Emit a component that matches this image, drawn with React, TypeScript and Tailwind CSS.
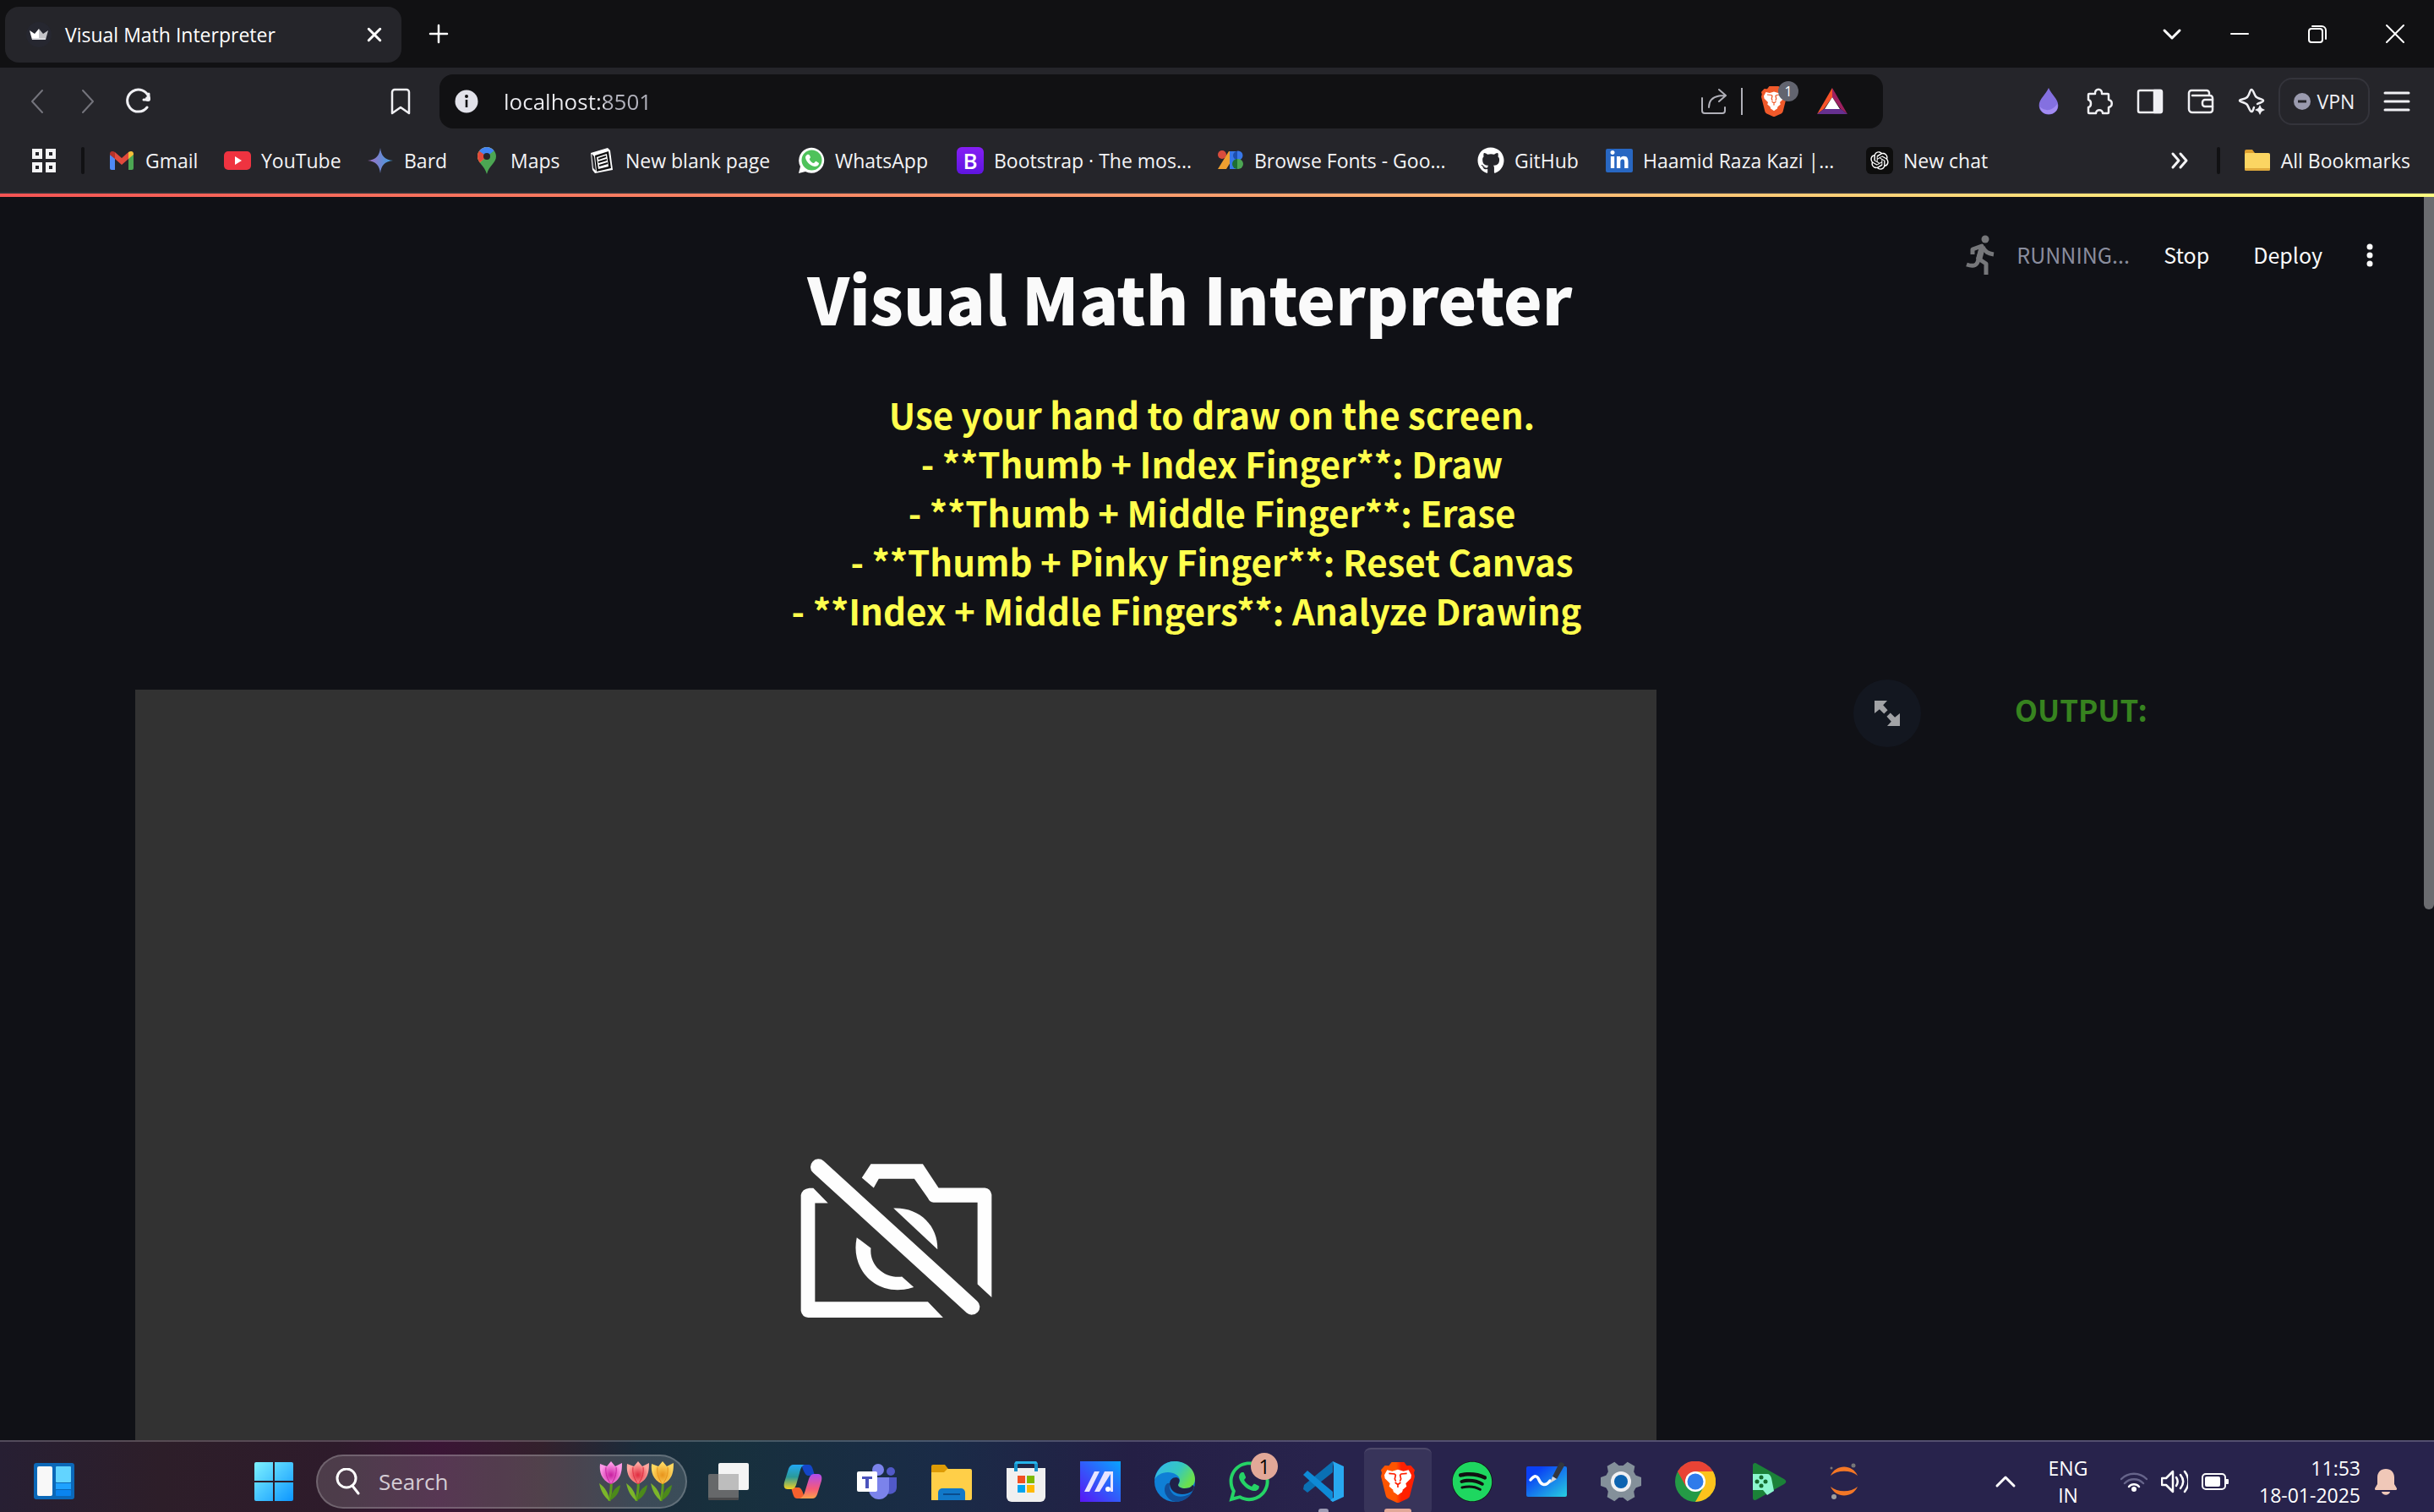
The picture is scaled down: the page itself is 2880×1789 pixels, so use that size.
import React from "react";
import { FaGithub, FaLinkedinIn, FaWhatsapp, FaSpotify } from "react-icons/fa";
import { RiOpenaiFill } from "react-icons/ri";

const uiFont = "font-['Open_Sans','Noto_Sans',sans-serif]";
const pageFont = "font-['Noto_Sans_CJK_SC','Noto_Sans',sans-serif]";

/* ---------- Shared glyphs ---------- */

function BraveMark({ className, id, from, to }: { className: string; id: string; from: string; to: string }) {
  return (
    <svg viewBox="0 0 120 144" className={className} aria-hidden="true">
      <defs>
        <linearGradient id={id} x1="0" x2="1">
          <stop offset="0.45" stopColor={from} />
          <stop offset="0.6" stopColor={to} />
        </linearGradient>
      </defs>
      <path
        d="M38 0h44l10 13 14-1 14 16-3 10 3 12-17 68c-1 6-5 9-9 12l-29 13q-5 2-10 0l-29-13c-4-3-8-6-9-12L0 50l3-12-3-10 14-16 14 1z"
        fill={`url(#${id})`}
      />
      <path
        d="M22 28l18 4 20-6 20 6 18-4 10 18-2 12-18 18 3 10-14 12-17-8-17 8-14-12 3-10-18-18-2-12z"
        fill="#fff"
      />
      <path d="M60 88l18 10-3 8-15 11-15-11-3-8z" fill="#fff" />
      <path
        d="M28 40l20 2 4 4-3 14 4 8M92 40l-20 2-4 4 3 14-4 8M50 72l10 8 10-8M60 80v10"
        fill="none"
        stroke={to}
        strokeWidth="5"
      />
    </svg>
  );
}

function Stroke({
  children,
  className = "h-8 w-8",
  width = 3,
}: {
  children: React.ReactNode;
  className?: string;
  width?: number;
}) {
  return (
    <svg
      viewBox="0 0 32 32"
      className={className}
      fill="none"
      stroke="currentColor"
      strokeWidth={width}
      strokeLinecap="round"
      strokeLinejoin="round"
      aria-hidden="true"
    >
      {children}
    </svg>
  );
}

/* ---------- Title bar ---------- */

function TitleBar() {
  return (
    <div className="flex h-20 items-center bg-[#111113] text-white">
      <div className="ml-1.5 mt-0.5 flex h-[66px] w-[469px] items-center rounded-2xl bg-[#25252a] pl-[25px] pr-4">
        <svg viewBox="0 0 30 30" className="h-[30px] w-[30px]" aria-hidden="true">
          <circle cx="15" cy="15" r="15" fill="#262730" />
          <path d="M4 10l6 4 5-6v13H7z" fill="#fff" />
          <path d="M15 8l5 6 6-4-3 11h-8z" fill="#c4c4c8" />
          <path d="M7 19h16v2H7z" fill="#dcdce0" />
        </svg>
        <span className="ml-4 flex-1 whitespace-nowrap text-[23px]">Visual Math Interpreter</span>
        <button type="button" aria-label="Close tab" className="flex h-8 w-8 items-center justify-center">
          <Stroke className="h-6 w-6" width={4}>
            <path d="M7 7l18 18M25 7L7 25" />
          </Stroke>
        </button>
      </div>
      <button type="button" aria-label="New tab" className="ml-6 flex h-10 w-10 items-center justify-center">
        <Stroke className="h-8 w-8" width={2.5}>
          <path d="M16 6v20M6 16h20" />
        </Stroke>
      </button>
      <div className="ml-auto flex h-full">
        <button type="button" aria-label="Search tabs" className="flex w-[68px] items-center justify-center">
          <Stroke width={3}>
            <path d="M7 12l9 9 9-9" />
          </Stroke>
        </button>
        <button type="button" aria-label="Minimize" className="flex w-[92px] items-center justify-center">
          <Stroke width={2}>
            <path d="M6 16h20" />
          </Stroke>
        </button>
        <button type="button" aria-label="Restore" className="flex w-[92px] items-center justify-center">
          <Stroke width={2}>
            <rect x="6" y="10" width="16" height="16" rx="3" />
            <path d="M10 7h11a5 5 0 0 1 5 5v10" />
          </Stroke>
        </button>
        <button type="button" aria-label="Close window" className="flex w-[92px] items-center justify-center">
          <Stroke width={2}>
            <path d="M6 6l20 20M26 6L6 26" />
          </Stroke>
        </button>
      </div>
    </div>
  );
}

/* ---------- Toolbar ---------- */

const toolButton = "flex h-15 w-15 items-center justify-center";

function Toolbar() {
  return (
    <div className="flex h-20 items-center bg-[#25252a] text-[#f0f0f4]">
      <div className="flex w-[520px] items-center pl-3.5 pr-4">
        <button type="button" aria-label="Back" className={`${toolButton} text-[#74747c]`}>
          <Stroke width={2}>
            <path d="M22 3L10 16l12 13" />
          </Stroke>
        </button>
        <button type="button" aria-label="Forward" className={`${toolButton} text-[#74747c]`}>
          <Stroke width={2}>
            <path d="M10 3l12 13-12 13" />
          </Stroke>
        </button>
        <button type="button" aria-label="Reload" className={toolButton}>
          <Stroke>
            <path d="M26 23A13 13 0 1 1 28 11" />
            <circle cx="27" cy="13" r="3" fill="currentColor" stroke="none" />
            <path d="M28 7v7h-6" />
          </Stroke>
        </button>
        <button type="button" aria-label="Bookmark this page" className={`${toolButton} ml-auto`}>
          <Stroke width={2.5}>
            <path d="M6 5a3 3 0 0 1 3-3h14a3 3 0 0 1 3 3v25l-10-7-10 7z" />
          </Stroke>
        </button>
      </div>

      <div className="flex h-16 flex-1 items-center rounded-2xl bg-[#111113] pl-[18px] pr-[42px]">
        <svg viewBox="0 0 28 28" className="h-7 w-7" aria-hidden="true">
          <circle cx="14" cy="14" r="13.5" fill="#e2e2ea" />
          <circle cx="14" cy="8" r="2" fill="#111113" />
          <path d="M12.7 12h2.6v9h-2.6z" fill="#111113" />
        </svg>
        <input
          aria-label="Address"
          defaultValue="localhost:8501"
          className="ml-[30px] min-w-0 flex-1 bg-[linear-gradient(90deg,#ececf0_119px,#b4b4be_119px)] bg-clip-text text-[26px] text-transparent outline-none"
        />
        <button type="button" aria-label="Share" className="text-[#b0b0b8]">
          <Stroke width={2}>
            <path d="M2 12v15a3 3 0 0 0 3 3h21a3 3 0 0 0 3-3v-4" />
            <path d="M10 23c0-9 6-14 18-14M22 2l8 7-8 7" />
          </Stroke>
        </button>
        <span className="ml-4 h-8 w-0.5 bg-[#b0b0b8]" />
        <button type="button" aria-label="Brave Shields, 1 blocked" className="relative ml-[19px]">
          <BraveMark id="shields" className="h-9 w-9" from="#f0592a" to="#f0592a" />
          <span className="absolute -top-1.5 left-[23px] flex h-6 w-6 items-center justify-center rounded-full bg-[#62646f] text-base text-white">
            1
          </span>
        </button>
        <button type="button" aria-label="Brave Rewards" className="ml-[33px]">
          <svg viewBox="0 0 36 32" className="h-8 w-9" aria-hidden="true">
            <path d="M18 0L0 31l8-6 10-14z" fill="#f8532a" />
            <path d="M18 0l18 31-8-6-10-14z" fill="#9e2060" />
            <path d="M0 31h36l-8-6H8z" fill="#66308f" />
            <path d="M18 11l9 14H9z" fill="#fff" />
          </svg>
        </button>
      </div>

      <div className="flex w-[652px] items-center justify-end pr-3.5">
        <button type="button" aria-label="Drop extension" className={toolButton}>
          <svg viewBox="0 0 26 34" className="h-8 w-[26px]" aria-hidden="true">
            <path d="M13 0c4 9 12 14 12 22a12 11.500 0 0 1-24 0C1 14 9 9 13 0z" fill="#8470e0" />
            <path d="M2 24c7 6 16 5 22-4 2 8-4 13-11 13S3 29 2 24z" fill="#a38cf2" />
          </svg>
        </button>
        <button type="button" aria-label="Extensions" className={toolButton}>
          <Stroke width={2.5}>
            <path d="M4 7h7c-1-7 9-7 8 0h7a1 1 0 0 1 1 1v6c5 1 5 8 0 9v6a1 1 0 0 1-1 1h-6c0-5-8-5-8 0H4a1 1 0 0 1-1-1v-6c4-1 4-8 0-9V8a1 1 0 0 1 1-1z" />
          </Stroke>
        </button>
        <button type="button" aria-label="Sidebar" className={toolButton}>
          <Stroke width={2.5}>
            <rect x="2" y="3" width="28" height="26" rx="2" />
            <path d="M21 3h8v26h-8z" fill="currentColor" />
          </Stroke>
        </button>
        <button type="button" aria-label="Wallet" className={toolButton}>
          <Stroke width={2.5}>
            <path d="M26 9V6a3 3 0 0 0-3-3H5a3 3 0 0 0-3 3v19a4 4 0 0 0 4 4h21a3 3 0 0 0 3-3V12a3 3 0 0 0-3-3H6" />
            <path d="M30 14h-9a3 3 0 0 0-3 3v2a3 3 0 0 0 3 3h9" />
          </Stroke>
        </button>
        <button type="button" aria-label="Leo AI" className={toolButton}>
          <Stroke width={2.5}>
            <path d="M23 19c4-2 7-2 7-4s-7-2-9-5-3-8-5-8-2 6-5 9-9 2-9 4 7 2 9 5 3 8 5 8 2-3 3-5" />
            <path d="M26 20l2 4 4 2-4 2-2 4-2-4-4-2 4-2z" fill="currentColor" stroke="none" />
          </Stroke>
        </button>
        <button
          type="button"
          className="mx-0.5 flex h-14 w-[108px] items-center justify-center gap-2 rounded-2xl border-2 border-[#34343b] text-[23px]"
        >
          <svg viewBox="0 0 20 20" className="h-5 w-5" aria-hidden="true">
            <circle cx="10" cy="10" r="10" fill="#9a9aae" />
            <path d="M5 8.500h10v3H5z" fill="#25252a" />
          </svg>
          VPN
        </button>
        <button type="button" aria-label="Menu" className={toolButton}>
          <Stroke>
            <path d="M2 6h28M2 16h28M2 26h28" />
          </Stroke>
        </button>
      </div>
    </div>
  );
}

/* ---------- Bookmarks bar ---------- */

const gmailIcon = (
  <svg viewBox="0 0 32 32" className="h-8 w-8" aria-hidden="true">
    <path d="M2 9v16a2 2 0 0 0 2 2h4V13z" fill="#4f8af5" />
    <path d="M24 13v14h4a2 2 0 0 0 2-2V9z" fill="#4ca653" />
    <path d="M8 6l8 7 8-7v8l-8 7-8-7z" fill="#e04a3c" />
    <path d="M2 8c0-3 3-4 6-2v8l-6-5z" fill="#b5332a" />
    <path d="M30 8c0-3-3-4-6-2v8l6-5z" fill="#f4bf3a" />
  </svg>
);

const youtubeIcon = (
  <svg viewBox="0 0 32 32" className="h-8 w-8" aria-hidden="true">
    <rect x="0" y="5" width="32" height="22" rx="5" fill="#ef3340" />
    <path d="M13 11l8 5-8 5z" fill="#fff" />
  </svg>
);

const bardIcon = (
  <svg viewBox="0 0 32 32" className="h-8 w-8" aria-hidden="true">
    <defs>
      <linearGradient id="bard" x1="0" x2="1">
        <stop offset="0" stopColor="#a46ec4" />
        <stop offset="1" stopColor="#3aa0e0" />
      </linearGradient>
    </defs>
    <path d="M16 1c1 9 5 14 15 15-10 1-14 6-15 15C15 22 11 17 1 16 11 15 15 10 16 1z" fill="url(#bard)" />
  </svg>
);

const mapsIcon = (
  <svg viewBox="0 0 32 32" className="h-8 w-8" aria-hidden="true">
    <clipPath id="pin">
      <path d="M16 0c6 0 11 5 11 11 0 8-8 10-11 21C13 21 5 19 5 11 5 5 10 0 16 0z" />
    </clipPath>
    <g clipPath="url(#pin)">
      <path d="M0 0h32v32H0z" fill="#4ca653" />
      <path d="M0 26L27 0H0z" fill="#f4bf3a" />
      <path d="M0 0h10l6 11-9 8-7-6z" fill="#e04a3c" />
      <path d="M6 4L10 0h18l-3 4-9 7z" fill="#4285f4" />
    </g>
    <circle cx="16" cy="11" r="4" fill="#25252a" />
  </svg>
);

const notionIcon = (
  <svg viewBox="0 0 32 32" className="h-8 w-8" aria-hidden="true">
    <path d="M3 7L23 1l3 3 3 23-21 4-3-4z" fill="#fff" />
    <path d="M4 8l3 3 2 17-3-3z" fill="#25252a" />
    <path d="M8 10l16-5 3 20-17 4z" fill="#111" />
    <path d="M10 12l12-4 2 15-12 3z" fill="#fff" />
    <path d="M12 14l9-3M12 18l10-3M13 22l10-3" stroke="#111" strokeWidth="2" />
  </svg>
);

const whatsappSmallIcon = (
  <svg viewBox="0 0 32 32" className="h-8 w-8" aria-hidden="true">
    <path d="M1 31l2-8A15 15 0 1 1 9 29z" fill="#fff" />
    <circle cx="16.500" cy="15.500" r="12" fill="#4fc25b" />
    <path d="M11 9c2-1 3 0 4 3 0 1-2 2-1 3 1 2 3 4 5 4 1 0 2-3 3-2l3 2c0 3-3 4-5 4-6-1-11-7-11-11 0-1 1-2 2-3z" fill="#fff" />
  </svg>
);

const bootstrapIcon = (
  <span className="flex h-8 w-8 items-center justify-center rounded-md bg-linear-to-b from-[#861ef5] to-[#5f14e0] text-[26px] font-semibold text-white">
    B
  </span>
);

const fontsIcon = (
  <svg viewBox="0 0 32 32" className="h-8 w-8" aria-hidden="true">
    <circle cx="6" cy="9" r="5" fill="#d94c3d" />
    <path d="M14 5L1 26h10l5-8V5z" fill="#f0a030" />
    <path d="M15 5h9v21h-9z" fill="#3877e8" />
    <circle cx="25" cy="10" r="5.500" fill="#3877e8" />
    <path d="M24 5a5 5 0 0 0 0 10z" fill="#1d4fae" />
    <circle cx="25" cy="20" r="6" fill="#4ca653" />
    <path d="M24 14a6 6 0 0 0 0 12z" fill="#1e6e34" />
  </svg>
);

const folderIcon = (
  <svg viewBox="0 0 32 32" className="h-8 w-8" aria-hidden="true">
    <path d="M1 5a2 2 0 0 1 2-2h7l3 4v6H1z" fill="#dd9f2e" />
    <rect x="1" y="7" width="30" height="21" rx="2" fill="#fbd562" />
    <path d="M1 25h30v1a2 2 0 0 1-2 2H3a2 2 0 0 1-2-2z" fill="#e0a93c" />
  </svg>
);

const bookmarks = [
  { label: "Gmail", width: "w-[59px]", icon: gmailIcon },
  { label: "YouTube", width: "w-[91px]", icon: youtubeIcon },
  { label: "Bard", width: "w-[48px]", icon: bardIcon },
  { label: "Maps", width: "w-[58px]", icon: mapsIcon },
  { label: "New blank page", width: "w-[170px]", icon: notionIcon },
  { label: "WhatsApp", width: "w-[110px]", icon: whatsappSmallIcon },
  { label: "Bootstrap · The mos...", width: "w-[230px]", icon: bootstrapIcon },
  { label: "Browse Fonts - Goo...", width: "w-[230px]", icon: fontsIcon },
  { label: "GitHub", width: "w-[74px]", icon: <FaGithub className="h-8 w-8 text-white" /> },
  {
    label: "Haamid Raza Kazi |...",
    width: "w-[230px]",
    icon: (
      <span className="flex h-7 w-8 items-center justify-center rounded-xs bg-[#2867c2] text-white">
        <FaLinkedinIn className="h-6 w-6" />
      </span>
    ),
  },
  {
    label: "New chat",
    width: "w-[98px]",
    icon: (
      <span className="flex h-8 w-8 items-center justify-center rounded-md bg-[#0d0d0d] text-white">
        <RiOpenaiFill className="h-[26px] w-[26px]" />
      </span>
    ),
  },
];

function BookmarksBar() {
  return (
    <nav className="flex h-[69px] items-start border-b-2 border-[#303036] bg-[#25252a] text-[23px] text-[#f4f4f6]">
      <div className="flex h-15 flex-1 items-center pl-9 pr-7">
        <button type="button" aria-label="Apps">
          <svg viewBox="0 0 32 32" className="h-8 w-8" fill="none" stroke="currentColor" strokeWidth="4" aria-hidden="true">
            <path d="M4 4h8v8H4zM20 4h8v8h-8zM4 20h8v8H4zM20 20h8v8h-8z" />
          </svg>
        </button>
        <span className="ml-7 h-8 w-1 rounded-full bg-[#111113]" />
        <div className="ml-7 flex items-center gap-[34px]">
          {bookmarks.map((b) => (
            <a key={b.label} href="#" className="flex items-center gap-3 whitespace-nowrap">
              {b.icon}
              <span className={`leading-8 ${b.width}`}>{b.label}</span>
            </a>
          ))}
        </div>
        <button type="button" aria-label="More bookmarks" className="ml-auto">
          <Stroke>
            <path d="M8 8l7 8-7 8M17 8l7 8-7 8" />
          </Stroke>
        </button>
        <span className="ml-7 h-8 w-1 rounded-full bg-[#111113]" />
        <button type="button" className="ml-7 flex items-center gap-3 whitespace-nowrap leading-8">
          {folderIcon}
          All Bookmarks
        </button>
      </div>
    </nav>
  );
}

/* ---------- Page ---------- */

const gestures = [
  "Use your hand to draw on the screen.",
  "- **Thumb + Index Finger**: Draw",
  "- **Thumb + Middle Finger**: Erase",
  "- **Thumb + Pinky Finger**: Reset Canvas",
];

function AppHeader() {
  return (
    <div className="absolute right-11 top-[33px] flex h-18 items-center text-[25px] text-[#fafafa]">
      <svg
        viewBox="0 0 36 48"
        className="h-12 w-9 text-[#76777a]"
        fill="none"
        stroke="currentColor"
        strokeWidth="5"
        aria-hidden="true"
      >
        <circle cx="23" cy="5" r="4.500" fill="currentColor" stroke="none" />
        <path d="M8 23v-6l11-4-4 15 9 6v13" strokeLinejoin="round" />
        <path d="M20 14c3 6 6 8 13 9" />
        <path d="M15 28c-1 8-5 10-14 7" />
        <path d="M16 14l7 1-4 15-7-2z" fill="currentColor" stroke="none" />
      </svg>
      <span className="ml-6 w-[138px] whitespace-nowrap text-[#8a8d9e]">RUNNING...</span>
      <button type="button" className="ml-9">
        Stop
      </button>
      <button type="button" className="ml-13">
        Deploy
      </button>
      <button type="button" aria-label="Main menu" className="ml-9 flex h-10 w-10 items-center justify-center">
        <svg viewBox="0 0 8 28" className="h-7 w-2" fill="currentColor" aria-hidden="true">
          <circle cx="4" cy="4" r="3.500" />
          <circle cx="4" cy="14" r="3.500" />
          <circle cx="4" cy="24" r="3.500" />
        </svg>
      </button>
    </div>
  );
}

function CameraOff() {
  return (
    <svg viewBox="140 90 680 566" className="h-[189px] w-[227px]" fill="#fefefe" aria-hidden="true">
      <path d="M142 222q4-22 30-25h14l52 53h-46v350h400l54 56H168q-22-2-26-24z" />
      <path d="M358 160l32-48h184l56 84h164q20 2 24 24v364l-50-46V248H612q-14-2-20-16l-48-68H418l-18 32z" />
      <path d="M470 268c90-4 158 60 156 146z" />
      <path d="M340 372l50 38c-6 60 46 108 110 101l42 37c-120 42-228-54-202-176z" />
      <path d="M204 122L748 618" fill="none" stroke="#fefefe" strokeWidth="56" strokeLinecap="round" />
    </svg>
  );
}

function Page() {
  return (
    <div className={`flex min-h-0 flex-1 bg-[#101116] ${pageFont}`}>
      <main className="relative min-w-0 flex-1 overflow-hidden px-40 pt-[59px]">
        <AppHeader />
        <h1 className="pr-13 text-center text-[77px] font-black leading-[120px] text-[#fafafa]">
          Visual Math Interpreter
        </h1>
        <div className="mt-[49px] text-center text-[42px] font-bold leading-[58px] text-[#ffff4d]">
          {gestures.map((line) => (
            <p key={line}>{line}</p>
          ))}
          <p className="pr-15">- **Index + Middle Fingers**: Analyze Drawing</p>
        </div>
        <div className="mt-[65px] grid grid-cols-[minmax(0,1fr)_324px] items-start gap-8">
          <div className="flex items-start justify-between pr-[79px]">
            <div className="flex aspect-[1800/1297] w-[1800px] items-center justify-center bg-[#323232]">
              <CameraOff />
            </div>
            <button
              type="button"
              aria-label="Fullscreen"
              className="-mt-3 flex h-20 w-20 shrink-0 items-center justify-center rounded-full bg-[#131720] text-[#a2a3a6]"
            >
              <svg viewBox="0 0 28 28" className="h-[30px] w-[30px]" fill="currentColor" aria-hidden="true">
                <path d="M0 0h14L9.500 5l5 5.500-4 4-5-5L0 14z" />
                <path d="M28 28H14l4.500-5-5-5.500 4-4 5 5L28 14z" />
              </svg>
            </button>
          </div>
          <h2 className="whitespace-nowrap text-[35px] font-bold leading-[46px] text-[#37831f]">OUTPUT:</h2>
        </div>
      </main>
      <div className="w-3">
        <div className="h-[843px] rounded-b-full bg-[#6b6c70]" />
      </div>
    </div>
  );
}

/* ---------- Taskbar ---------- */

function Petals({ x, light, dark, id }: { x: number; light: string; dark: string; id: string }) {
  return (
    <g transform={`translate(${x} 0)`}>
      <defs>
        <radialGradient id={id} cx="0.5" cy="0.6">
          <stop offset="0" stopColor={dark} />
          <stop offset="1" stopColor={light} />
        </radialGradient>
      </defs>
      <path d="M16 24c1 9-1 15-2 23" stroke="#5d9a1c" strokeWidth="3" fill="none" />
      <path d="M14 47C8 42 4 36 2 26c7 5 11 11 12 21z" fill="#7cb62a" />
      <path d="M15 46c1-9 5-14 12-18-1 8-5 15-12 18z" fill="#4c8a1a" />
      <path d="M3 3l8 3 5-6 5 6 8-4c0 10-1 20-13 25C4 22 2 12 3 3z" fill={`url(#${id})`} />
      <path d="M10 7c-1 8 2 15 6 20 4-5 7-12 6-20" fill="none" stroke={dark} strokeWidth="1" />
    </g>
  );
}

const taskViewIcon = (
  <svg viewBox="0 0 48 48" className="h-12 w-12" aria-hidden="true">
    <rect x="0" y="15" width="36" height="31" rx="2" fill="#66686a" />
    <rect x="12" y="2" width="36" height="32" rx="2" fill="#f4f4f4" />
    <path d="M12 15h24v19H14a2 2 0 0 1-2-2z" fill="#bdbdbd" />
    <path d="M0 43h36v1a2 2 0 0 1-2 2H2a2 2 0 0 1-2-2z" fill="#4a4a4c" />
  </svg>
);

const copilotIcon = (
  <svg viewBox="0 0 48 48" className="h-12 w-12" aria-hidden="true">
    <defs>
      <linearGradient id="copA" x1="0" y1="0" x2="0" y2="1">
        <stop offset="0" stopColor="#22a8f5" />
        <stop offset="0.5" stopColor="#2a9a9a" />
        <stop offset="1" stopColor="#f5d020" />
      </linearGradient>
      <linearGradient id="copB" x1="0" y1="0" x2="0" y2="1">
        <stop offset="0" stopColor="#b04cf0" />
        <stop offset="0.6" stopColor="#f55a7a" />
        <stop offset="1" stopColor="#fba04a" />
      </linearGradient>
    </defs>
    <path d="M22 4h9c3 0 4 3 5 6l2 7h-8c-3 0-5-5-8-13z" fill="#1446c8" />
    <path d="M26 44h-9c-3 0-4-3-5-6l-2-7h9c3 0 5 5 7 13z" fill="#f5602e" />
    <path d="M13 4h13c-4 1-5 6-6 10l-4 14c-1 3-3 5-6 5H6c-4 0-5-3-4-8l5-16c1-3 3-5 6-5z" fill="url(#copA)" />
    <path d="M35 44H20c4-1 6-6 7-10l4-13c1-3 3-6 6-6h5c4 0 5 4 4 8l-5 16c-1 3-3 5-6 5z" fill="url(#copB)" />
  </svg>
);

const teamsIcon = (
  <svg viewBox="0 0 48 48" className="h-12 w-12" aria-hidden="true">
    <circle cx="40" cy="12" r="5" fill="#5159c8" />
    <path d="M34 19h13v12a8 8 0 0 1-13 6z" fill="#5159c8" />
    <circle cx="25" cy="10" r="7" fill="#7b83eb" />
    <path d="M14 19h24v14a12 12 0 0 1-24 0z" fill="#7b83eb" />
    <rect x="0" y="12" width="24" height="24" rx="2" fill="#fff" />
    <path d="M6 18h12v3h-4v11h-4V21H6z" fill="#4b53bc" />
  </svg>
);

const explorerIcon = (
  <svg viewBox="0 0 48 48" className="h-12 w-12" aria-hidden="true">
    <path d="M0 6a2 2 0 0 1 2-2h14l4 5v8H0z" fill="#dd9b06" />
    <path d="M0 13h15l4-4h27a2 2 0 0 1 2 2v33a2 2 0 0 1-2 2H0z" fill="#ffcf48" />
    <path d="M8 46V37a5 5 0 0 1 5-5h22a5 5 0 0 1 5 5v9z" fill="#1178c8" />
    <path d="M14 38h20v2H14z" fill="#0a4c8c" />
  </svg>
);

const storeIcon = (
  <svg viewBox="0 0 48 48" className="h-12 w-12" aria-hidden="true">
    <path d="M12 11V4a3 3 0 0 1 3-3h18a3 3 0 0 1 3 3v7" fill="none" stroke="#27b4ea" strokeWidth="4" />
    <path d="M1 8h46v34a6 6 0 0 1-6 6H7a6 6 0 0 1-6-6z" fill="#f0f0f0" />
    <path d="M10 3h4v9h-4zM34 3h4v9h-4z" fill="#1590c8" />
    <path d="M14 17h9v9h-9z" fill="#f25022" />
    <path d="M25 17h9v9h-9z" fill="#7fba00" />
    <path d="M14 28h9v9h-9z" fill="#00a4ef" />
    <path d="M25 28h9v9h-9z" fill="#ffb900" />
  </svg>
);

const myAsusIcon = (
  <svg viewBox="0 0 48 48" className="h-12 w-12" aria-hidden="true">
    <defs>
      <linearGradient id="asus" x1="0" y1="1" x2="1" y2="0">
        <stop offset="0" stopColor="#5a14f5" />
        <stop offset="1" stopColor="#08a4ff" />
      </linearGradient>
    </defs>
    <path d="M0 0h48v48H0z" fill="url(#asus)" />
    <path d="M5 36L17 12h6L11 36zM17 36l12-24h10v24h-3V15L23 36z" fill="#e8e4ff" />
    <circle cx="33" cy="33" r="3" fill="#fff" />
  </svg>
);

const edgeIcon = (
  <svg viewBox="0 0 48 48" className="h-12 w-12" aria-hidden="true">
    <defs>
      <linearGradient id="edgeA" x1="0" y1="0" x2="1" y2="0.5">
        <stop offset="0" stopColor="#34b4f0" />
        <stop offset="0.6" stopColor="#35c8c0" />
        <stop offset="1" stopColor="#6be04c" />
      </linearGradient>
    </defs>
    <circle cx="24" cy="24" r="24" fill="#0f7fd6" />
    <path d="M0 22C3 8 12 0 24 0c14 0 24 10 24 21 0 8-6 11-12 11-5 0-8-2-8-4 0-1 2-2 2-6 0-5-7-9-14-9C8 13 2 17 0 22z" fill="url(#edgeA)" />
    <path d="M18 26c-2 12 8 18 18 15 4-1 7-3 9-5-4 8-12 12-20 12-8-1-13-9-13-14 0-6 3-9 6-8z" fill="#114f9a" />
    <path d="M28 28c0 2 3 4 8 4 4 0 7-1 9-4 2 1 3 3 0 7-9 7-26 5-27-8 0-5 3-8 8-8 6 2 3 6 2 9z" fill="#202148" />
  </svg>
);

const vscodeIcon = (
  <svg viewBox="0 0 48 48" className="h-12 w-12" aria-hidden="true">
    <path d="M35 0v13L5 37l-5-4 1-5z" fill="#0a70b4" />
    <path d="M5 11L35 36v12L0 16z" fill="#0e8ad6" />
    <path d="M35 0l13 6v36l-13 6-3-2 4-3V6z" fill="#28a8f0" />
  </svg>
);

const whiteboardIcon = (
  <svg viewBox="0 0 48 48" className="h-12 w-12" aria-hidden="true">
    <defs>
      <linearGradient id="board" x1="0.2" y1="0.2" x2="1" y2="1">
        <stop offset="0" stopColor="#0a40f5" />
        <stop offset="1" stopColor="#27cfe0" />
      </linearGradient>
    </defs>
    <rect x="0" y="6" width="48" height="36" rx="2" fill="url(#board)" />
    <path d="M5 22c5-6 8-5 10 0s7 9 13 1" fill="none" stroke="#fff" strokeWidth="3.500" strokeLinecap="round" />
    <path d="M31 18l8-16c1-2 7 0 6 3l-9 16z" fill="#33363c" />
    <path d="M31 18l5 3-8 5z" fill="#d8d8d8" />
  </svg>
);

const settingsIcon = (
  <svg viewBox="0 0 48 48" className="h-12 w-12" aria-hidden="true">
    <g fill="#84909a">
      <circle cx="24" cy="24" r="19" />
      {[30, 90, 150, 210, 270, 330].map((a) => (
        <path key={a} d="M19 0h10l4 11H15z" transform={`rotate(${a} 24 24)`} />
      ))}
    </g>
    <circle cx="24" cy="24" r="12" fill="#f0f0f2" />
    <circle cx="24" cy="24" r="8" fill="#0d63b0" />
  </svg>
);

const chromeIcon = (
  <svg viewBox="0 0 48 48" className="h-12 w-12" aria-hidden="true">
    <circle cx="24" cy="24" r="24" fill="#249a46" />
    <path d="M24 12h21A24 24 0 0 1 24 48l10-18z" fill="#fcc31c" />
    <path d="M3 12a24 24 0 0 1 42 0H24L13 30z" fill="#e94335" />
    <circle cx="24" cy="24" r="12" fill="#fff" />
    <circle cx="24" cy="24" r="9.500" fill="#2f7bea" />
  </svg>
);

const playGamesIcon = (
  <svg viewBox="0 0 48 48" className="h-12 w-12" aria-hidden="true">
    <path d="M4 5c0-3 3-4 5-2l32 18c3 2 3 4 0 6L9 45c-3 2-5 1-5-2z" fill="#1b8238" />
    <path d="M4 15h17c3 0 4 2 5 5l3 15-8 5-5-6H4z" fill="#8cf7cf" />
    <g fill="#146c2e">
      <circle cx="14" cy="19" r="2.500" />
      <circle cx="14" cy="29" r="2.500" />
      <circle cx="9" cy="24" r="2.500" />
      <circle cx="19" cy="24" r="2.500" />
    </g>
  </svg>
);

const jupyterIcon = (
  <svg viewBox="0 0 48 48" className="h-12 w-12" aria-hidden="true">
    <path d="M8 17C14 3 34 3 40 17 32 10 16 10 8 17z" fill="#f37726" />
    <path d="M8 30c6 14 26 14 32 0-8 7-24 7-32 0z" fill="#f37726" />
    <circle cx="35" cy="5" r="2.500" fill="#767677" />
    <circle cx="9" cy="8" r="1.500" fill="#767677" />
    <circle cx="12" cy="42" r="3" fill="#9e9e9e" />
  </svg>
);

const apps = [
  { name: "Task View", icon: taskViewIcon },
  { name: "Copilot", icon: copilotIcon },
  { name: "Teams", icon: teamsIcon },
  { name: "File Explorer", icon: explorerIcon },
  { name: "Microsoft Store", icon: storeIcon },
  { name: "MyASUS", icon: myAsusIcon },
  { name: "Edge", icon: edgeIcon },
  {
    name: "WhatsApp",
    icon: (
      <>
        <FaWhatsapp className="h-[54px] w-[54px] text-[#25d366]" />
        <span className="absolute left-[42px] top-1.5 flex h-8 w-8 items-center justify-center rounded-full bg-[#e2a898] text-[23px] text-black">
          1
        </span>
      </>
    ),
  },
  { name: "Visual Studio Code", icon: vscodeIcon, bar: "w-3 bg-[#9d9bb4]" },
  {
    name: "Brave",
    icon: <BraveMark id="braveApp" className="h-12 w-12" from="#ff5500" to="#ff2000" />,
    active: true,
    bar: "w-8 bg-[#e2a898]",
  },
  {
    name: "Spotify",
    icon: (
      <span className="flex h-12 w-12 items-center justify-center rounded-full bg-[#111]">
        <FaSpotify className="h-12 w-12 text-[#1ed760]" />
      </span>
    ),
  },
  { name: "Whiteboard", icon: whiteboardIcon },
  { name: "Settings", icon: settingsIcon },
  { name: "Chrome", icon: chromeIcon },
  { name: "Play Games", icon: playGamesIcon },
  { name: "Jupyter", icon: jupyterIcon },
];

function Taskbar() {
  return (
    <footer className="flex h-[85px] shrink-0 items-start overflow-hidden border-t-2 border-[#ffffff]/20 bg-[linear-gradient(90deg,#271f33_0px,#2d1e29_190px,#2e1b2b_400px,#3a1535_520px,#33202c_640px,#1a2c3b_760px,#17303d_860px,#1a2b47_1120px,#241f45_1340px,#28234c_1560px,#28234c_100%)] bg-origin-border text-[23px] text-white">
      <div className="flex h-[94px] w-full items-center">
        <button type="button" aria-label="Widgets" className="ml-10">
          <svg viewBox="0 0 48 48" className="h-12 w-12" aria-hidden="true">
            <rect x="0" y="2" width="48" height="43" rx="3" fill="#0b68b8" />
            <rect x="4" y="6" width="18" height="35" rx="2" fill="#f8f8f8" />
            <rect x="26" y="6" width="18" height="19" rx="1" fill="#62d4ff" />
            <rect x="26" y="26" width="18" height="7" fill="#1fa2ff" />
            <rect x="26" y="34" width="18" height="7" rx="1" fill="#0a84ee" />
          </svg>
        </button>
        <button type="button" aria-label="Start" className="ml-[212px]">
          <svg viewBox="0 0 48 48" className="h-12 w-12" aria-hidden="true">
            <defs>
              <linearGradient id="start" x1="0" y1="0" x2="48" y2="48" gradientUnits="userSpaceOnUse">
                <stop offset="0" stopColor="#80f4ff" />
                <stop offset="1" stopColor="#0a94ff" />
              </linearGradient>
            </defs>
            <path d="M1 3a2 2 0 0 1 2-2h20v22H1zM25 1h20a2 2 0 0 1 2 2v20H25zM1 25h22v22H3a2 2 0 0 1-2-2zM25 25h22v20a2 2 0 0 1-2 2H25z" fill="url(#start)" />
          </svg>
        </button>
        <label className="ml-[26px] flex h-16 w-[439px] items-center rounded-full border-2 border-[#ffffff]/20 bg-[#ffffff]/15 pl-5 pr-2.5">
          <Stroke>
            <circle cx="14" cy="12" r="11" />
            <path d="M21 21l7 9" />
          </Stroke>
          <input
            aria-label="Search"
            placeholder="Search"
            className="ml-5 min-w-0 flex-1 text-[26px] outline-none placeholder:text-[#d4ccd4]"
          />
          <svg viewBox="0 0 96 48" className="h-12 w-24" aria-hidden="true">
            <Petals id="petalA" x={2} light="#ff9ae8" dark="#c81fa0" />
            <Petals id="petalB" x={34} light="#ffa8a0" dark="#e02c40" />
            <Petals id="petalC" x={63} light="#ffd860" dark="#e8941c" />
          </svg>
        </label>
        <div className="ml-[9px] flex items-center gap-2">
          {apps.map((app) => (
            <button
              key={app.name}
              type="button"
              aria-label={app.name}
              className={`relative flex h-20 w-20 items-center justify-center ${app.active ? "rounded-lg border-t-2 border-[#ffffff]/10 bg-[#ffffff]/8" : ""}`}
            >
              {app.icon}
              {app.bar && <span className={`absolute bottom-0.5 h-1.5 rounded-full ${app.bar}`} />}
            </button>
          ))}
        </div>
        <div className="ml-auto flex items-center pr-[43px]">
          <button type="button" aria-label="Show hidden icons">
            <Stroke width={3}>
              <path d="M6 21l10-10 10 10" />
            </Stroke>
          </button>
          <div className="ml-4 w-[84px] text-center leading-8">
            <div>ENG</div>
            <div>IN</div>
          </div>
          <svg viewBox="0 0 32 32" className="ml-5 h-8 w-8" fill="none" strokeWidth="2.500" strokeLinecap="round" aria-hidden="true">
            <path d="M1 13a21 21 0 0 1 30 0M5 18a15 15 0 0 1 22 0" stroke="#66648a" />
            <path d="M10 22a8 8 0 0 1 12 0" stroke="#fff" />
            <circle cx="16" cy="25" r="3" fill="#fff" />
          </svg>
          <Stroke className="ml-4 h-8 w-8" width={2.5}>
            <path d="M1 12h5l8-8v24l-8-8H1z" />
            <path d="M18 11c2 3 2 7 0 10M23 8c4 5 4 11 0 16M28 4c6 8 6 16 0 24" />
          </Stroke>
          <svg viewBox="0 0 32 32" className="ml-4 h-8 w-8" aria-hidden="true">
            <rect x="1" y="7" width="27" height="18" rx="4" fill="none" stroke="#fff" strokeWidth="2" />
            <rect x="4" y="10" width="18" height="12" rx="2" fill="#fff" />
            <path d="M29 13h2a1 1 0 0 1 1 1v4a1 1 0 0 1-1 1h-2z" fill="#fff" />
          </svg>
          <div className="ml-4 w-[140px] text-right leading-8">
            <div>11:53</div>
            <div className="whitespace-nowrap">18-01-2025</div>
          </div>
          <button type="button" aria-label="Notifications" className="ml-4">
            <svg viewBox="0 0 28 32" className="h-8 w-7" fill="#f0c8b8" aria-hidden="true">
              <path d="M14 1c6 0 10 4 10 10v8l3 5c0 1 0 2-1 2H2c-1 0-1-1-1-2l3-5v-8C4 5 8 1 14 1z" />
              <path d="M9 28h10c-1 5-9 5-10 0z" />
            </svg>
          </button>
        </div>
      </div>
    </footer>
  );
}

export default function App() {
  return (
    <div className={`flex h-screen flex-col overflow-hidden bg-[#101116] ${uiFont}`}>
      <TitleBar />
      <Toolbar />
      <BookmarksBar />
      <div className="h-1 w-full shrink-0 bg-linear-to-r from-[#f55454] via-[#fb9f6e] to-[#fffd80]" />
      <Page />
      <Taskbar />
    </div>
  );
}
